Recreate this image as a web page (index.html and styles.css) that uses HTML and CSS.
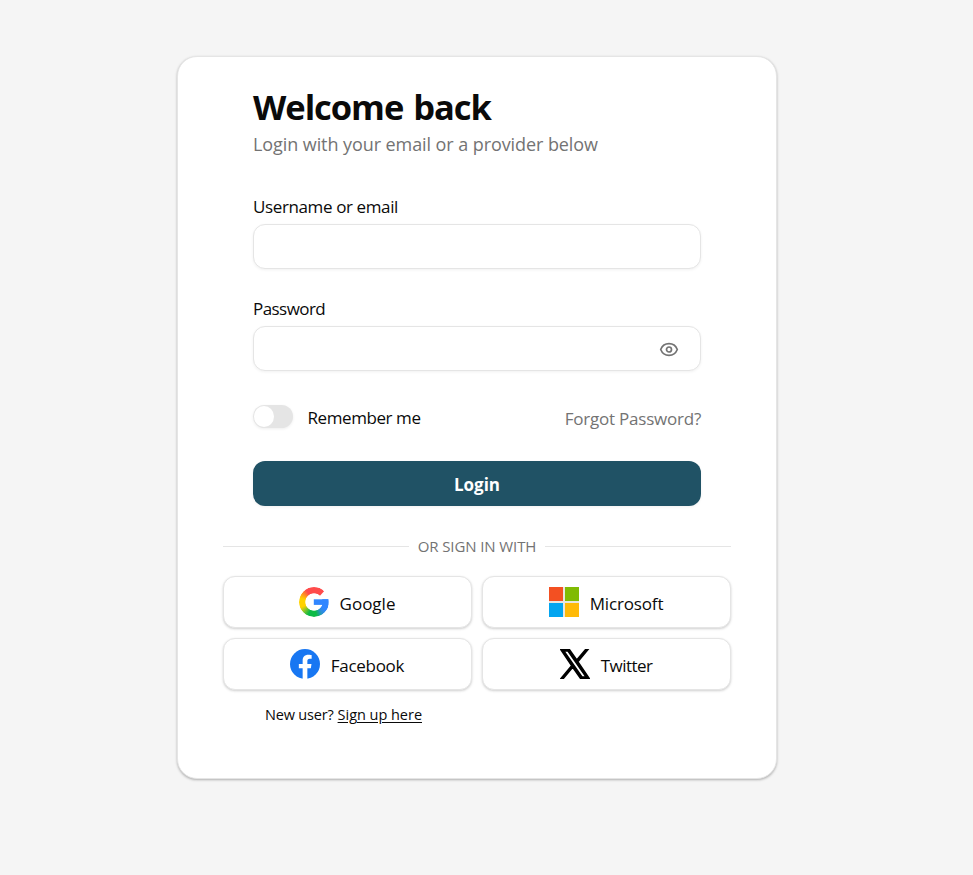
FILE: index.html
```html
<!DOCTYPE html>
<html lang="en">
<head>
<meta charset="utf-8">
<title>Login</title>
<link rel="stylesheet" href="styles.css">
</head>
<body>
<main class="card">
  <form class="form">
    <h1 class="title"><span>Welcome back</span></h1>
    <p class="subtitle"><span>Login with your email or a provider below</span></p>
    <div class="field">
      <label for="user">Username or email</label>
      <input class="box" id="user" type="text">
    </div>
    <div class="field">
      <label class="narrow" for="pass">Password</label>
      <div class="box password">
        <input id="pass" type="password">
        <svg class="eye" viewBox="0 0 20 20" fill="none" stroke="#737373" stroke-width="1.7"><path d="M1.700 10.500C3.200 6.800 6.200 4.700 10 4.700s6.800 2.100 8.300 5.800c-1.500 3.700-4.500 5.800-8.300 5.800S3.200 14.200 1.700 10.500z"/><circle cx="10" cy="10.500" r="2.500"/></svg>
      </div>
    </div>
    <div class="options">
      <label class="remember"><span class="switch"><span class="thumb"></span></span><span class="remember-text">Remember me</span></label>
      <a class="forgot">Forgot Password?</a>
    </div>
    <button class="login" type="button">Login</button>
  </form>
  <div class="divider"><span>OR SIGN IN WITH</span></div>
  <div class="providers">
    <button class="provider" type="button">
      <span class="logo google"><svg viewBox="0 0 30 30"><path d="M14.800 12.300H29.300V17.900H14.800z" fill="#3086ff"/></svg></span>
      <span class="name wide">Google</span>
    </button>
    <button class="provider" type="button">
      <svg class="logo" viewBox="0 0 30 30"><path fill="#e8e6e0" d="M0 0h30v30H0z"/><path fill="#f35022" d="M0 0h14v14H0z"/><path fill="#80bb03" d="M16 0h14v14H16z"/><path fill="#03a5f0" d="M0 16h14v14H0z"/><path fill="#ffba08" d="M16 16h14v14H16z"/></svg>
      <span class="name microsoft">Microsoft</span>
    </button>
    <button class="provider" type="button">
      <svg class="logo" viewBox="0 0 30 30"><circle cx="15" cy="15" r="15" fill="#1877f2"/><path fill="#fff" d="M12.650 30V19.300H8.850V15h3.800v-3.300c0-3.750 2.250-5.850 5.650-5.850 1.650 0 3.350.3 3.350.3v3.700h-1.900c-1.850 0-2.400 1.150-2.400 2.350V15h4.150l-.660 4.300h-3.490V30z"/></svg>
      <span class="name">Facebook</span>
    </button>
    <button class="provider" type="button">
      <svg class="logo" viewBox="0 0 30 30"><path d="M17.850 12.700 28 .5H25.600L16.750 11 9.400.5H.8l10.800 16.200L1 29.500h2.300l9.400-11.200L20.600 29.500h8.600zM3.850 2H8L26.100 28h-4.100z" fill="#000" stroke="#000" stroke-width="1.500"/></svg>
      <span class="name tight">Twitter</span>
    </button>
  </div>
  <p class="signup"><span>New user?</span><a>Sign up here</a></p>
</main>
</body>
</html>
```
FILE: styles.css
```css
* { box-sizing: border-box; }
body {
  margin: 0;
  min-height: 100vh;
  padding: 56px 0 0 177px;
  background: #f5f5f5;
  color: #0a0a0a;
  font: 17px/24px "Open Sans", "Noto Sans", sans-serif;
}
h1, p { margin: 0; }
button, input { font: inherit; color: inherit; }
span, a { white-space: nowrap; }
.card {
  width: 600px;
  height: 723px;
  padding: 28px 45px 0;
  border: 1px solid #e5e5e5;
  border-radius: 20px;
  background: #fff;
  box-shadow: 0 1px 3px rgba(0,0,0,.18), 0 1px 2px rgba(0,0,0,.12);
}
.form { padding: 0 30px; }
.title { height: 44px; font-size: 34.5px; line-height: 44px; font-weight: 700; letter-spacing: -1.05px; word-spacing: 2px; }
.subtitle { margin: 1px 0 37px; font-size: 18px; line-height: 28px; color: #737373; letter-spacing: -.08px; }
.field { margin-bottom: 28px; }
.field label { display: block; margin-bottom: 5px; letter-spacing: -.38px; }
.field label.narrow { letter-spacing: -.55px; }
.field + .field { margin-bottom: 34px; }
.box {
  display: block;
  width: 448px;
  height: 45px;
  border: 1px solid #e5e5e5;
  border-radius: 12px;
  background: #fff;
  box-shadow: 0 1px 3px rgba(0,0,0,.06);
  outline: 0;
}
.password { display: flex; align-items: center; padding-right: 21px; }
.password input { flex: 1; min-width: 0; border: 0; outline: 0; background: none; }
.eye { width: 20px; height: 20px; }
.options { display: flex; justify-content: space-between; height: 24px; margin-bottom: 32px; }
.remember { display: flex; gap: 14.5px; letter-spacing: -.42px; }
.switch { width: 40px; height: 23px; padding: 1px; border-radius: 12px; background: #e5e5e5; box-shadow: 0 1px 3px rgba(0,0,0,.07); }
.thumb { display: block; width: 20px; height: 21px; border-radius: 50%; background: #fff; }
.remember-text { padding-top: 1px; }
.forgot { padding-top: 2px; color: #737373; letter-spacing: -.22px; }
.login { display: block; width: 448px; height: 45px; padding: 2px 0 0; border: 0; border-radius: 12px; background: #205265; color: #fff; font-weight: 700; box-shadow: 0 1px 3px rgba(0,0,0,.06); }
.divider { display: flex; align-items: center; gap: 9px; height: 20px; margin: 30px 0 20px; font-size: 15px; line-height: 20px; color: #737373; letter-spacing: -.1px; }
.divider::before, .divider::after { content: ""; flex: 1; height: 1px; background: #e5e5e5; }
.providers { display: grid; grid-template-columns: 249px 249px; gap: 10px; }
.provider { display: flex; align-items: center; justify-content: center; gap: 11px; height: 52px; padding: 0 1px 0 0; border: 1px solid #e5e5e5; border-radius: 12px; background: #fff; box-shadow: 0 1px 3px rgba(0,0,0,.12), 0 1px 2px rgba(0,0,0,.08); }
.name { padding-top: 3px; letter-spacing: -.3px; }
.wide { letter-spacing: 0; }
.microsoft { letter-spacing: -.15px; }
.tight { letter-spacing: -.55px; }
.logo { display: block; flex: none; width: 30px; height: 30px; }
.google { position: relative; }
.google::before {
  content: "";
  position: absolute;
  inset: 0;
  border-radius: 50%;
  background: conic-gradient(#ff4b4b 0 52deg, #3086ff 52deg 125deg, #2a90d0 145deg, #0cba45 170deg 205deg, #8cc62a 228deg, #ffd200 248deg 285deg, #ff9c1a 303deg, #ff4b4b 327deg);
  clip-path: polygon(0 0, 80% 0, 85% 14%, 66% 35%, 50% 50%, 50% 41%, 100% 41%, 100% 100%, 0 100%);
  -webkit-mask: radial-gradient(circle, transparent 8.300px, #000 9px);
  mask: radial-gradient(circle, transparent 8.300px, #000 9px);
}
.google svg { position: relative; display: block; width: 30px; height: 30px; }
.signup { display: flex; gap: 4px; margin: 14px 0 0 42px; font-size: 14.500px; line-height: 22px; letter-spacing: -.18px; }
.signup a { text-decoration: underline; text-underline-offset: 2px; letter-spacing: -.03px; }
```
